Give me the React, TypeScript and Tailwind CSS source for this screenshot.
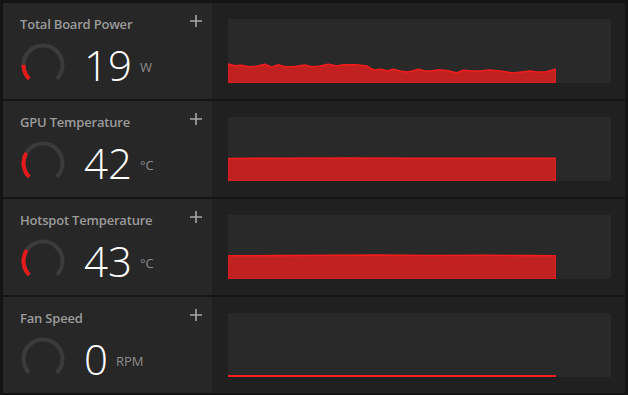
import React from "react";

type Metric = {
  title: string;
  value: string;
  unit: string;
  pct: number;
  points: [number, number][];
  lineOnly?: boolean;
};

const powerPoints: [number, number][] = [
  [0, 45], [7, 46.7], [13.7, 46.3], [20.3, 47.7], [28.7, 47.3], [37, 45.3], [43.7, 48.3],
  [50.3, 45.7], [57, 47.7], [65.3, 47.7], [77, 46], [83.7, 47.7], [92, 47], [100.3, 45.3],
  [108.7, 47], [115.3, 45.7], [128.7, 45.7], [138.7, 47], [145.3, 51], [153.7, 50.3],
  [158.7, 52], [165.3, 50.3], [172, 52], [178.7, 53], [183.7, 52.3], [190.3, 50.3],
  [197, 52], [203.7, 52], [210.3, 50.7], [220.3, 51.7], [228.7, 54], [235.3, 51.3],
  [243.7, 52], [253.7, 52], [260.3, 51], [272, 52], [285.3, 54], [293.7, 53], [302, 52],
  [308.7, 53], [318.7, 52.7], [327.7, 50],
];

const gpuPoints: [number, number][] = [
  [0, 41.5], [60, 41.3], [120, 41], [180, 41.3], [240, 41.2], [300, 41.4], [327.7, 41.2],
];

const hotspotPoints: [number, number][] = [
  [0, 40.8], [50, 40.6], [110, 40.3], [150, 40.1], [200, 40.5], [260, 40.3], [300, 40.6], [327.7, 40.8],
];

const fanPoints: [number, number][] = [
  [0, 63], [327.7, 63],
];

const metrics: Metric[] = [
  { title: "Total Board Power", value: "19", unit: "W", pct: 17, points: powerPoints },
  { title: "GPU Temperature", value: "42", unit: "°C", pct: 28, points: gpuPoints },
  { title: "Hotspot Temperature", value: "43", unit: "°C", pct: 29, points: hotspotPoints },
  { title: "Fan Speed", value: "0", unit: "RPM", pct: 0, points: fanPoints, lineOnly: true },
];

function Gauge({ pct }: { pct: number }) {
  // 270° arc, opening at the bottom
  const d = "M 8.21 35.79 A 19.5 19.5 0 1 1 35.79 35.79";
  return (
    <svg width="44" height="44" viewBox="0 0 44 44" className="shrink-0">
      <path d={d} fill="none" stroke="#3b3b3b" strokeWidth="4" />
      {pct > 0 && (
        <path
          d={d}
          fill="none"
          stroke="#e61a1a"
          strokeWidth="4"
          pathLength={100}
          strokeDasharray={`${pct} 100`}
        />
      )}
    </svg>
  );
}

function PlusIcon() {
  return (
    <svg width="12" height="12" viewBox="0 0 12 12">
      <path d="M6 0 V12 M0 6 H12" stroke="#a9a9a9" strokeWidth="1.6" />
    </svg>
  );
}

function Chart({ points, lineOnly }: { points: [number, number][]; lineOnly?: boolean }) {
  const line = points.map(([x, y], i) => `${i === 0 ? "M" : "L"} ${x} ${y}`).join(" ");
  const last = points[points.length - 1];
  const area = `${line} L ${last[0]} 64 L 0 64 Z`;
  return (
    <div className="h-[64px] w-[383px] bg-[#292929]">
      <svg width="328" height="64" viewBox="0 0 328 64" className="block">
        {!lineOnly && <path d={area} fill="#c12121" />}
        <path
          d={line}
          fill="none"
          stroke={lineOnly ? "#ff1f1f" : "#f51c1c"}
          strokeWidth={lineOnly ? 2 : 1.6}
          strokeLinejoin="round"
        />
        {!lineOnly && (
          <path
            d={`M ${last[0]} ${last[1]} L ${last[0]} 64 L 0 64 L 0 ${points[0][1]}`}
            fill="none"
            stroke="#e81e1e"
            strokeWidth="1.2"
          />
        )}
      </svg>
    </div>
  );
}

function MetricRow({ m }: { m: Metric }) {
  return (
    <div className="flex h-[96px]">
      {/* left side */}
      <div className="w-[209px] bg-[#272727] pl-[17px] pr-[10px] pt-[12px]">
        <div className="flex items-start justify-between">
          <span className="text-[13px] leading-[18px] font-semibold tracking-[-0.2px] text-[#9b9b9b]">
            {m.title}
          </span>
          <PlusIcon />
        </div>
        <div className="mt-[10px] flex items-center">
          <div className="ml-[1px]">
            <Gauge pct={m.pct} />
          </div>
          <span className="ml-[19px] text-[42px] leading-[44px] font-light text-white">{m.value}</span>
          <span className="ml-[8px] mt-[5px] text-[13px] text-[#8c8c8c]">{m.unit}</span>
        </div>
      </div>
      {/* chart side */}
      <div className="flex-1 bg-[#202020] pl-[16px] pt-[16px]">
        <Chart points={m.points} lineOnly={m.lineOnly} />
      </div>
    </div>
  );
}

export default function App() {
  return (
    <div
      className="flex h-[395px] w-[628px] flex-col gap-[2px] bg-[#141414] px-[3px] pt-[3px] pb-[2px]"
      style={{ fontFamily: '"Open Sans", "Noto Sans", sans-serif' }}
    >
      {metrics.map((m) => (
        <MetricRow key={m.title} m={m} />
      ))}
    </div>
  );
}
